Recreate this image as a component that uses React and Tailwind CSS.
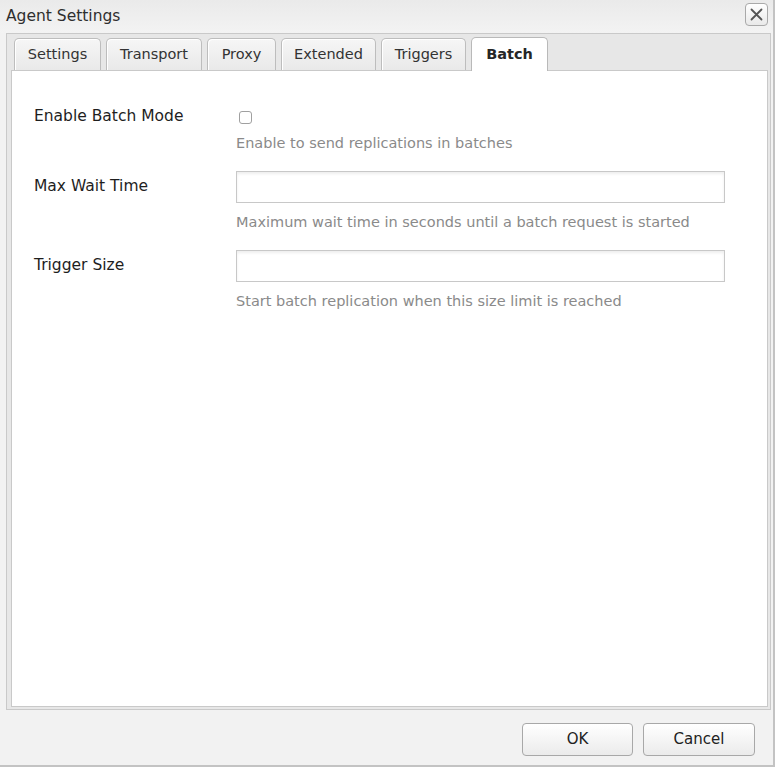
import React from "react";

const font = { fontFamily: '"DejaVu Sans", Verdana, sans-serif' };

function Tab({ label, width, active }) {
  if (active) {
    return (
      <div
        className="relative z-10 -mb-px flex h-[34px] items-center justify-center rounded-t-[5px] border border-b-0 border-[#b9b9b9] bg-white text-[14.5px] font-bold text-[#262626]"
        style={{ width }}
      >
        {label}
      </div>
    );
  }
  return (
    <div
      className="flex h-[32px] items-center justify-center rounded-t-[5px] border border-b-0 border-[#bdbdbd] bg-gradient-to-b from-[#f6f6f6] to-[#e9e9e9] text-[14.5px] text-[#333] shadow-[inset_1px_1px_0_#ffffff]"
      style={{ width }}
    >
      {label}
    </div>
  );
}

function Row({ label, children, help, helpMt, labelH }) {
  return (
    <div className="flex">
      <div
        className="flex w-[202px] shrink-0 items-center text-[15.5px] text-[#1e1e1e]"
        style={{ height: labelH }}
      >
        {label}
      </div>
      <div className="flex w-[489px] flex-col">
        {children}
        <div
          className="text-[14.5px] leading-[18px] text-[#8a8a8a]"
          style={{ marginTop: helpMt }}
        >
          {help}
        </div>
      </div>
    </div>
  );
}

function TextInput() {
  return (
    <div className="h-[32px] w-[489px] border border-[#c8c8c8] bg-white shadow-[inset_0_2px_3px_rgba(0,0,0,0.07)]" />
  );
}

export default function App() {
  const tabs = [
    ["Settings", 87],
    ["Transport", 96],
    ["Proxy", 69],
    ["Extended", 95],
    ["Triggers", 85],
  ];
  return (
    <div className="h-[769px] w-[777px] bg-white" style={font}>
      <div className="flex h-[767px] w-[775px] flex-col border-b-2 border-r-2 border-[#c3c3c3] bg-[#f2f2f2]">
        {/* header */}
        <div className="flex h-[33px] shrink-0 items-start justify-between bg-gradient-to-b from-[#eaeaea] to-[#f3f3f3] pl-[6px] pr-[5px]">
          <div className="pt-[6px] text-[15.5px] leading-[20px] text-[#2e2e2e]">Agent Settings</div>
          <div className="mt-[3px] flex h-[23px] w-[23px] items-center justify-center rounded-[4px] border border-[#a9a9a9] bg-gradient-to-b from-white to-[#e9e9e9]">
            <svg width="13" height="13" viewBox="0 0 13 13">
              <path d="M1.5 1.5 L11.5 11.5 M11.5 1.5 L1.5 11.5" stroke="#555" strokeWidth="1.8" strokeLinecap="round" />
            </svg>
          </div>
        </div>

        {/* tab panel */}
        <div className="ml-[6px] flex h-[677px] w-[765px] flex-col border border-[#c9c9c9] bg-[#e7e7e7] pb-[2px] pl-[4px] pr-[2px] pt-[3px]">
          <div className="flex h-[33px] shrink-0 items-end gap-[5px] pl-[3px]">
            {tabs.map(([l, w]) => (
              <Tab key={l} label={l} width={w} />
            ))}
            <Tab label="Batch" width={77} active />
          </div>
          <div className="flex flex-1 flex-col gap-[19px] border border-[#c9c9c9] bg-white pl-[22px] pt-[36px]">
            <Row label="Enable Batch Mode" help="Enable to send replications in batches" helpMt={7} labelH={20}>
              <div className="flex h-[20px] items-center">
                <span className="ml-[3px] block h-[13px] w-[13px] rounded-[3px] border border-[#a0a0a0] bg-white" />
              </div>
            </Row>
            <Row label="Max Wait Time" help="Maximum wait time in seconds until a batch request is started" helpMt={10} labelH={32}>
              <TextInput />
            </Row>
            <Row label="Trigger Size" help="Start batch replication when this size limit is reached" helpMt={10} labelH={32}>
              <TextInput />
            </Row>
          </div>
        </div>

        {/* footer */}
        <div className="flex justify-end gap-[10px] pr-[18px] pt-[13px]">
          <button className="flex h-[33px] w-[111px] items-center justify-center rounded-[4px] border border-[#a8a8a8] bg-gradient-to-b from-white to-[#ebebeb] text-[15px] text-[#222]">
            OK
          </button>
          <button className="flex h-[33px] w-[112px] items-center justify-center rounded-[4px] border border-[#a8a8a8] bg-gradient-to-b from-white to-[#ebebeb] text-[15px] text-[#222]">
            Cancel
          </button>
        </div>
      </div>
    </div>
  );
}
